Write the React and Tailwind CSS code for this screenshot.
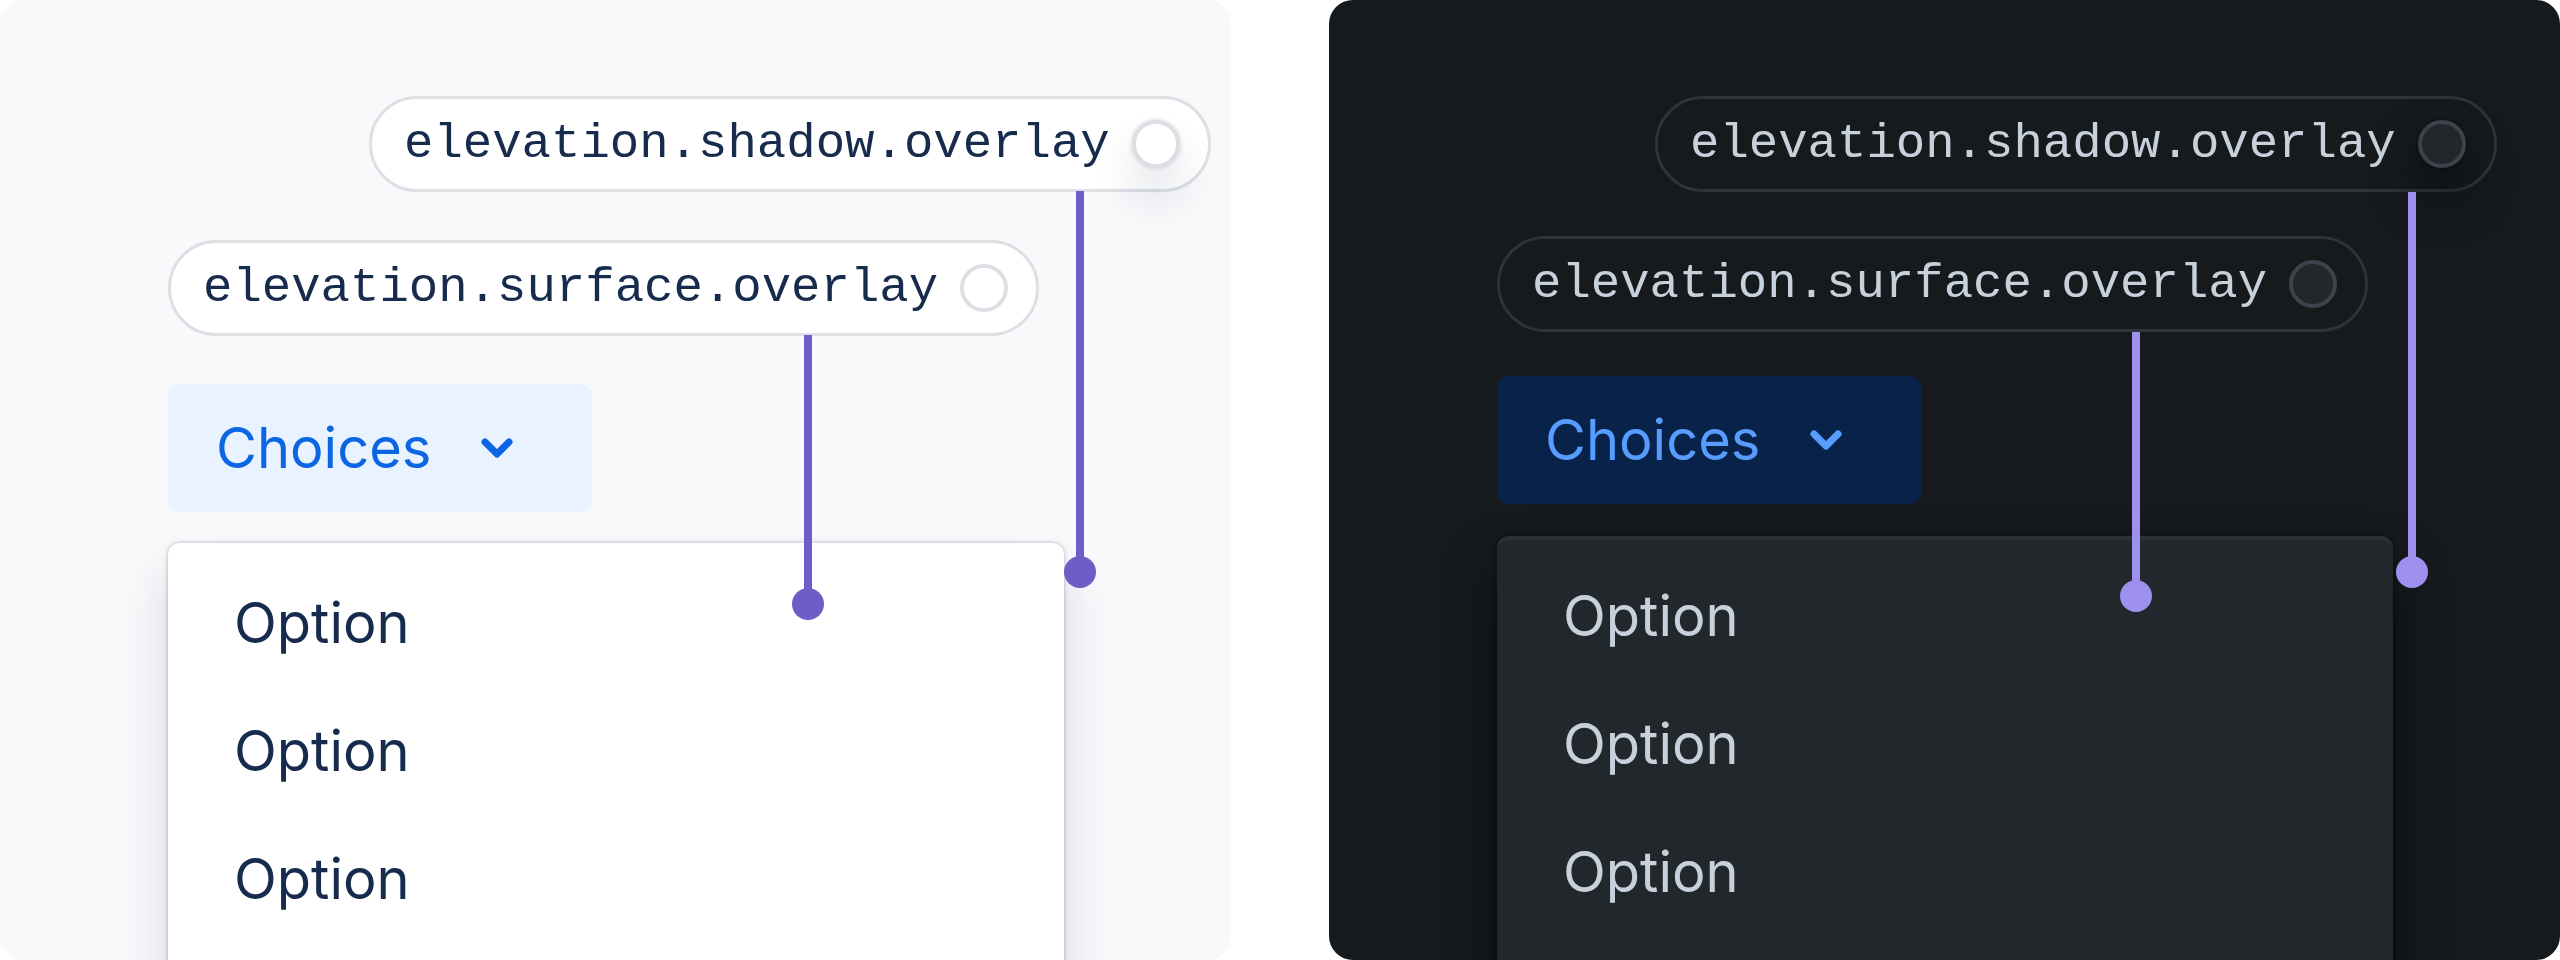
import React from 'react';

const themes = {
  light: {
    panel: 'bg-[#f8f9fb]',
    chip: 'border-[#dcdfe4] bg-white text-[#172b4d]',
    dot: 'border-[#dcdfe4] bg-white',
    dotShadow: 'shadow-[0_28px_44px_rgba(9,30,66,0.14),0_0_4px_rgba(9,30,66,0.18)]',
    button: 'bg-[#e9f2ff] text-[#0c66e4]',
    menu: 'bg-white text-[#172b4d] shadow-[0_32px_48px_rgba(9,30,66,0.15),0_0_4px_rgba(9,30,66,0.31)]',
    leader: 'bg-[#6e5dc6]',
  },
  dark: {
    panel: 'bg-[#161a1d]',
    chip: 'border-[#2c333a] bg-[#161a1d] text-[#c7d1db]',
    dot: 'border-[#3b444d] bg-[#22272b]',
    dotShadow: 'shadow-[0_28px_44px_rgba(3,4,4,0.5),0_0_4px_rgba(3,4,4,0.5)]',
    button: 'bg-[#09224a] text-[#579dff]',
    menu: 'bg-[#22272b] text-[#c7d1db] shadow-[inset_0_4px_0_0_rgba(188,214,240,0.05),0_32px_48px_rgba(3,4,4,0.56),0_0_4px_rgba(3,4,4,0.5)]',
    leader: 'bg-[#9f8fef]',
  },
};

const Chip = ({ label, t, shadow, className }) => (
  <div className={`flex h-[96px] w-fit shrink-0 items-center gap-[22px] rounded-full border-[3px] pl-8 pr-7 ${t.chip} ${className}`}>
    <span className="font-['Liberation_Mono',monospace] text-[49px] leading-none">{label}</span>
    <span className={`size-12 shrink-0 rounded-full border-4 ${t.dot} ${shadow ? t.dotShadow : ''}`} />
  </div>
);

const Panel = ({ t, layout }) => (
  <div className={`relative flex h-[960px] w-[1231px] shrink-0 flex-col items-start overflow-hidden rounded-[24px] pl-[168px] pt-[96px] font-['Inter',sans-serif] ${t.panel}`}>
    <Chip label="elevation.shadow.overlay" t={t} shadow className={layout.chip1} />
    <Chip label="elevation.surface.overlay" t={t} className={layout.chip2} />

    <button className={`flex h-[128px] w-[424px] shrink-0 items-center rounded-[12px] pl-12 text-[56px] leading-none ${t.button} ${layout.button}`}>
      <span>Choices</span>
      <span className="ml-[18px] flex w-24 items-center justify-center">
        <svg width="32" height="20" viewBox="0 0 32 20" fill="none">
          <path d="M4 4 L16 16 L28 4" stroke="currentColor" strokeWidth="7" strokeLinecap="round" strokeLinejoin="round" />
        </svg>
      </span>
    </button>

    <div className={`h-[480px] w-[896px] shrink-0 rounded-[12px] py-4 ${t.menu} ${layout.menu}`}>
      {['Option', 'Option', 'Option'].map((o, i) => (
        <div key={i} className="flex h-[128px] items-center pl-[66px] text-[56px] leading-none">{o}</div>
      ))}
    </div>

    {/* token leaders */}
    <div className={`absolute w-2 ${t.leader} ${layout.line1}`} />
    <div className={`absolute size-8 rounded-full ${t.leader} ${layout.dot1}`} />
    <div className={`absolute w-2 ${t.leader} ${layout.line2}`} />
    <div className={`absolute size-8 rounded-full ${t.leader} ${layout.dot2}`} />
  </div>
);

const lightLayout = {
  chip1: 'ml-[201px]',
  chip2: 'mt-[48px]',
  button: 'mt-[48px]',
  menu: 'mt-[31px]',
  line1: 'left-[1076px] top-[191px] h-[381px]',
  dot1: 'left-[1064px] top-[556px]',
  line2: 'left-[804px] top-[335px] h-[269px]',
  dot2: 'left-[792px] top-[588px]',
};

const darkLayout = {
  chip1: 'ml-[158px]',
  chip2: 'mt-[44px]',
  button: 'mt-[44px]',
  menu: 'mt-[32px]',
  line1: 'left-[1079px] top-[192px] h-[380px]',
  dot1: 'left-[1067px] top-[556px]',
  line2: 'left-[803px] top-[332px] h-[264px]',
  dot2: 'left-[791px] top-[580px]',
};

export default function App() {
  return (
    <div className="flex h-[960px] w-[2560px] justify-between overflow-hidden bg-white">
      <Panel t={themes.light} layout={lightLayout} />
      <Panel t={themes.dark} layout={darkLayout} />
    </div>
  );
}
